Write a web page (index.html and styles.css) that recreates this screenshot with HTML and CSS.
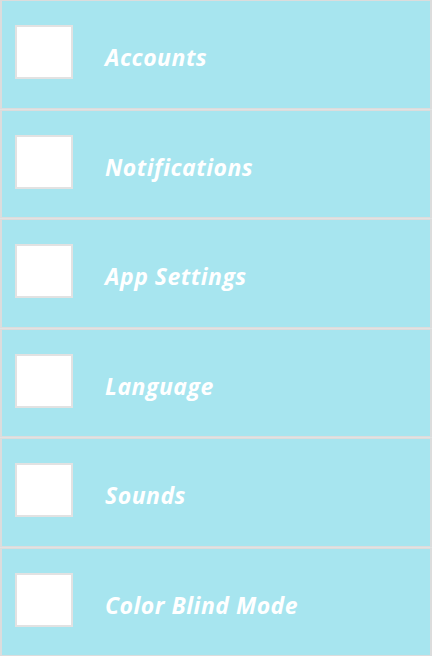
FILE: index.html
```html
<!DOCTYPE html>
<html>
<head>
<meta charset="utf-8">
<link rel="stylesheet" href="styles.css">
</head>
<body>
<div class="list">
  <div class="row"><span class="box"></span><span class="label">Accounts</span></div>
  <div class="row"><span class="box"></span><span class="label">Notifications</span></div>
  <div class="row"><span class="box"></span><span class="label">App Settings</span></div>
  <div class="row"><span class="box"></span><span class="label">Language</span></div>
  <div class="row"><span class="box"></span><span class="label">Sounds</span></div>
  <div class="row"><span class="box"></span><span class="label">Color Blind Mode</span></div>
</div>
</body>
</html>
```
FILE: styles.css
```css
html, body {
  margin: 0;
  padding: 0;
  background: #ffffff;
}
.list {
  display: flex;
  flex-direction: column;
  gap: 1px;
  width: 432px;
  background: #e2e2e2;
}
.row {
  box-sizing: border-box;
  height: 108.5px;
  display: flex;
  align-items: center;
  background: #a7e5ef;
  border: 1px solid #dcdcdc;
  border-left-width: 2px;
  border-right-width: 2px;
  padding-left: 13px;
}
.box {
  box-sizing: border-box;
  width: 58px;
  height: 54px;
  background: #ffffff;
  border: 2px solid #e2e2e2;
  margin-top: -4px;
}
.label {
  margin-left: 32px;
  margin-top: 6px;
  font-family: "Open Sans", sans-serif;
  font-weight: 700;
  font-style: italic;
  font-size: 23px;
  letter-spacing: 0.5px;
  color: #ffffff;
}
```
